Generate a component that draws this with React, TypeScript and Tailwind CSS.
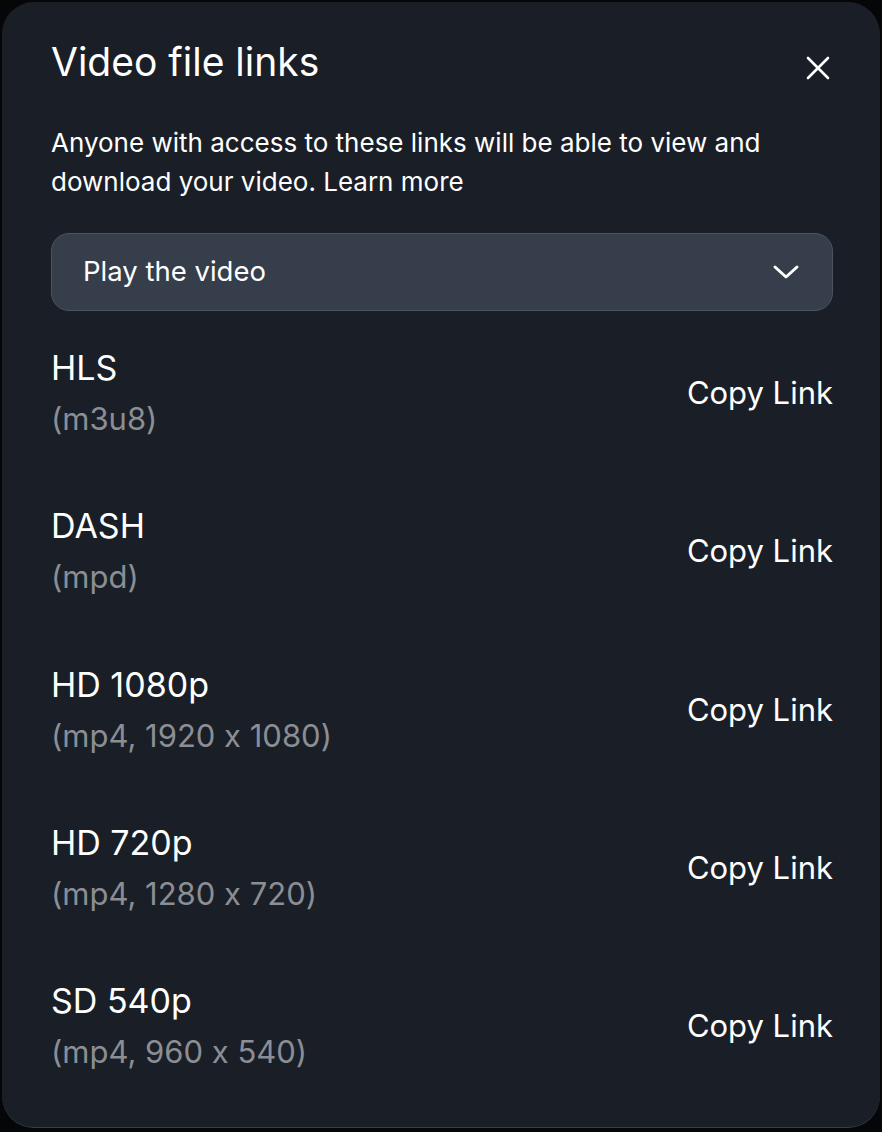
import React from "react";

const links = [
  { name: "HLS", detail: "(m3u8)" },
  { name: "DASH", detail: "(mpd)" },
  { name: "HD 1080p", detail: "(mp4, 1920 x 1080)" },
  { name: "HD 720p", detail: "(mp4, 1280 x 720)" },
  { name: "SD 540p", detail: "(mp4, 960 x 540)" },
];

function LinkRow({ name, detail }: { name: string; detail: string }) {
  return (
    <div className="flex items-center justify-between h-[158.3px]">
      <div className="flex flex-col">
        <span className="text-[34px] leading-[51px] text-white">{name}</span>
        <span className="text-[31px] leading-[51px] text-[#8b8e94]">{detail}</span>
      </div>
      <button className="text-[31px] leading-[40px] text-white">Copy Link</button>
    </div>
  );
}

export default function App() {
  return (
    <div
      className="w-[882px] h-[1132px] bg-[#050607] pt-[2px] px-[2px]"
      style={{ fontFamily: "Inter, 'Liberation Sans', sans-serif", fontFeatureSettings: "'calt' 0" }}
    >
      <div className="h-[1126px] rounded-[32px] bg-[#1a1f27] border-b border-[#34404d] pl-[49px] pr-[47px] pt-[36px]">
        <div className="flex items-start justify-between">
          <h2 className="text-[39px] leading-[48px] text-white">Video file links</h2>
          <button className="mt-[18px] mr-[3px] text-white">
            <svg width="24" height="24" viewBox="0 0 24 24" fill="none" stroke="currentColor" strokeWidth="2.6" strokeLinecap="round">
              <path d="M2 2L22 22M22 2L2 22" />
            </svg>
          </button>
        </div>
        <p className="mt-[37px] text-[26px] leading-[39px] text-white pr-[10px]">
          Anyone with access to these links will be able to view and download your video. Learn more
        </p>
        <div className="mt-[32px] h-[78px] rounded-[18px] bg-[#353e4a] border border-[#4a5461] flex items-center justify-between pl-[31px] pr-[32px]">
          <span className="text-[27.5px] text-white">Play the video</span>
          <svg width="28" height="18" viewBox="0 0 28 18" fill="none" stroke="white" strokeWidth="3" strokeLinecap="round" strokeLinejoin="round">
            <path d="M3 4L14 14L25 4" />
          </svg>
        </div>
        <div className="mt-[3px]">
          {links.map((l) => (
            <LinkRow key={l.name} name={l.name} detail={l.detail} />
          ))}
        </div>
      </div>
    </div>
  );
}
